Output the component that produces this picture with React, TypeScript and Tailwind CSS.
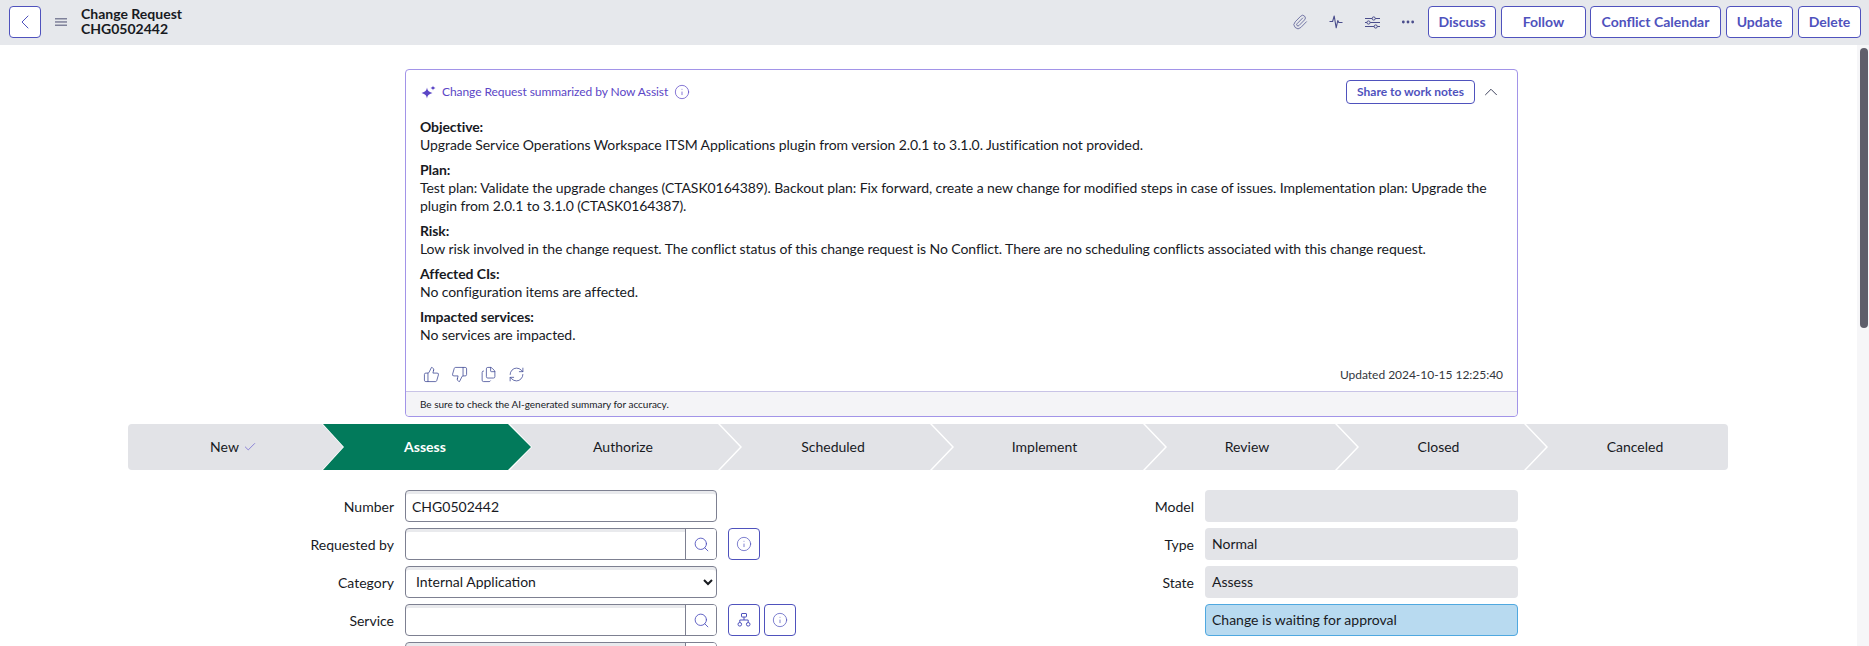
import { Paperclip, MoreHorizontal, ChevronLeft, ChevronUp, Info, ThumbsUp, ThumbsDown, Files, RefreshCw, Check, Search } from 'lucide-react';

const INK = 'text-[#181a1f]';

const summary = [
  {
    title: 'Objective:',
    lines: ['Upgrade Service Operations Workspace ITSM Applications plugin from version 2.0.1 to 3.1.0. Justification not provided.'],
  },
  {
    title: 'Plan:',
    lines: [
      'Test plan: Validate the upgrade changes (CTASK0164389). Backout plan: Fix forward, create a new change for modified steps in case of issues. Implementation plan: Upgrade the',
      'plugin from 2.0.1 to 3.1.0 (CTASK0164387).',
    ],
  },
  {
    title: 'Risk:',
    lines: ['Low risk involved in the change request. The conflict status of this change request is No Conflict. There are no scheduling conflicts associated with this change request.'],
  },
  { title: 'Affected CIs:', lines: ['No configuration items are affected.'] },
  { title: 'Impacted services:', lines: ['No services are impacted.'] },
];

function HeaderButton({ label, className }: { label: string; className: string }) {
  return (
    <button className={`h-[32px] rounded-[4px] border border-[#4f52bd] bg-white pb-[2px] text-[14px] font-bold text-[#4f52bd] ${className}`}>
      {label}
    </button>
  );
}

function IconButton({ children }: { children: React.ReactNode }) {
  return (
    <button className="flex h-[32px] w-[32px] items-center justify-center rounded-[4px] border border-[#4f52bd] bg-white text-[#4f52bd]">
      {children}
    </button>
  );
}

function HamburgerIcon() {
  return (
    <svg width="12" height="8" viewBox="0 0 12 8" fill="#7f819a">
      <rect y="0" width="12" height="1.5" />
      <rect y="3.2" width="12" height="1.5" />
      <rect y="6.5" width="12" height="1.5" />
    </svg>
  );
}

function PulseIcon() {
  return (
    <svg width="14" height="14" viewBox="0 0 14 14" fill="none" stroke="currentColor" strokeWidth="1.1" strokeLinejoin="round">
      <path d="M0.5 6.5H3.6L5.2 1L7.2 12.8L8.8 5.5L9.8 7.5H13.5" />
    </svg>
  );
}

function TuningIcon() {
  return (
    <svg width="15" height="13" viewBox="0 0 15 13" fill="none" stroke="currentColor" strokeWidth="1">
      <path d="M0 2.5H15M0 6.5H15M0 10.5H15" />
      <circle cx="8.7" cy="2.5" r="1.6" fill="#e6e8ec" />
      <circle cx="3.5" cy="6.5" r="1.6" fill="#e6e8ec" />
      <circle cx="10.7" cy="10.5" r="1.6" fill="#e6e8ec" />
    </svg>
  );
}

function SparkleIcon() {
  return (
    <svg width="15" height="14" viewBox="0 0 15 14" fill="#5b46c6">
      <path d="M6 2.5C6.5 5.6 7.6 6.9 11.5 8C7.6 9.1 6.5 10.4 6 13.5C5.5 10.4 4.4 9.1 0.5 8C4.4 6.9 5.5 5.6 6 2.5Z" />
      <path d="M12 0.5C12.2 1.9 12.8 2.4 14.5 3C12.8 3.6 12.2 4.1 12 5.5C11.8 4.1 11.2 3.6 9.5 3C11.2 2.4 11.8 1.9 12 0.5Z" />
    </svg>
  );
}

function TreeIcon() {
  return (
    <svg width="14" height="14" viewBox="0 0 14 14" fill="none" stroke="currentColor" strokeWidth="1">
      <rect x="4.5" y="0.5" width="5" height="3.5" rx="0.5" />
      <path d="M7 4V7M2.8 9.5V7H11.2V9.5" />
      <circle cx="2.8" cy="11.3" r="1.8" />
      <circle cx="11.2" cy="11.3" r="1.8" />
    </svg>
  );
}

function Header() {
  return (
    <div className="flex h-[45px] items-center bg-[#e6e8ec] pb-[1px] pl-[9px] pr-[8px]">
      <button className="flex h-[32px] w-[32px] items-center justify-center rounded-[4px] border border-[#4f52bd] bg-white text-[#4f52bd]">
        <ChevronLeft size={24} strokeWidth={1} />
      </button>
      <div className="ml-[14px] flex"><HamburgerIcon /></div>
      <div className={`-mt-[2px] ml-[14px] text-[14px] font-bold leading-[15px] ${INK}`}>
        <div>Change Request</div>
        <div>CHG0502442</div>
      </div>
      <div className="ml-auto flex items-center text-[#4a4d8c]">
        <div className="flex w-[36px] justify-center"><Paperclip size={16} strokeWidth={1.1} /></div>
        <div className="flex w-[36px] justify-center"><PulseIcon /></div>
        <div className="flex w-[36px] justify-center"><TuningIcon /></div>
        <div className="flex w-[36px] justify-center"><MoreHorizontal size={16} strokeWidth={2.2} /></div>
        <div className="ml-[2px] flex gap-[5px]">
          <HeaderButton label="Discuss" className="w-[68px]" />
          <HeaderButton label="Follow" className="w-[85px]" />
          <HeaderButton label="Conflict Calendar" className="-ml-[1px] w-[131px]" />
          <HeaderButton label="Update" className="w-[67px]" />
          <HeaderButton label="Delete" className="w-[63px]" />
        </div>
      </div>
    </div>
  );
}

function SummaryCard() {
  return (
    <div className="ml-[405px] w-[1113px] rounded-[4px] border border-[#a294e8] bg-white">
      <div className="flex h-[37px] items-center pl-[15px] pr-[15px] pt-[6px]">
        <SparkleIcon />
        <span className="ml-[6px] text-[12px] tracking-[-0.07px] text-[#5b46c6]">Change Request summarized by Now Assist</span>
        <Info size={16} strokeWidth={1.1} className="ml-[6px] text-[#5b46c6]" />
        <button className="ml-auto h-[24px] w-[129px] rounded-[4px] border border-[#4f52bd] text-[12px] font-bold text-[#4f52bd]">
          Share to work notes
        </button>
        <ChevronUp size={22} strokeWidth={1} className="ml-[5px] text-[#2f3350]" />
      </div>
      <div className={`mt-[11px] flex flex-col gap-[7px] px-[14px] text-[14px] leading-[18px] tracking-[-0.08px] ${INK}`}>
        {summary.map((s) => (
          <div key={s.title}>
            <div className="font-bold">{s.title}</div>
            {s.lines.map((l) => (
              <div key={l} className="whitespace-nowrap">{l}</div>
            ))}
          </div>
        ))}
      </div>
      <div className="mt-[14px] flex h-[33px] items-center pl-[17px] pr-[14px] text-[#3f4a96]">
        <ThumbsUp size={17} strokeWidth={1.1} />
        <ThumbsDown size={17} strokeWidth={1.1} className="ml-[11px]" />
        <Files size={17} strokeWidth={1.1} className="ml-[12px]" />
        <RefreshCw size={17} strokeWidth={1.1} className="ml-[11px]" />
        <span className="ml-auto text-[12px] tracking-[-0.03px] text-[#33363d]">Updated 2024-10-15 12:25:40</span>
      </div>
      <div className={`flex h-[25px] items-center rounded-b-[4px] border-t border-[#c8c3e6] bg-[#f4f4f7] pl-[14px] text-[10px] tracking-[-0.02px] ${INK}`}>
        Be sure to check the AI-generated summary for accuracy.
      </div>
    </div>
  );
}

function Stepper() {
  const common = 'flex h-[46px] items-center justify-center pb-[1px] text-[14px]';
  return (
    <div className={`ml-[128px] mt-[7px] flex w-[1600px] ${INK}`}>
      <div className={`${common} w-[215px] rounded-l-[4px] bg-[#e2e3e7] pr-[4px] [clip-path:polygon(0_0,194px_0,100%_50%,194px_100%,0_100%)]`}>
        New <Check size={14} strokeWidth={1.25} className="ml-[4px] text-[#6a5fd0]" />
      </div>
      <div className={`${common} -ml-[20px] w-[208px] bg-[#027a5b] pr-[4px] font-bold text-white [clip-path:polygon(0_0,185px_0,100%_50%,185px_100%,0_100%,21px_50%)]`}>
        Assess
      </div>
      <div className={`${common} -ml-[21px] w-[230px] bg-[#e2e3e7] pr-[4px] [clip-path:polygon(0_0,208px_0,100%_50%,208px_100%,0_100%,22px_50%)]`}>Authorize</div>
      <div className={`${common} -ml-[20px] w-[232px] bg-[#e2e3e7] pr-[6px] [clip-path:polygon(0_0,210px_0,100%_50%,210px_100%,0_100%,22px_50%)]`}>Scheduled</div>
      <div className={`${common} -ml-[20px] w-[233px] bg-[#e2e3e7] pr-[8px] [clip-path:polygon(0_0,211px_0,100%_50%,211px_100%,0_100%,22px_50%)]`}>Implement</div>
      <div className={`${common} -ml-[20px] w-[212px] bg-[#e2e3e7] pr-[8px] [clip-path:polygon(0_0,190px_0,100%_50%,190px_100%,0_100%,22px_50%)]`}>Review</div>
      <div className={`${common} -ml-[20px] w-[209px] bg-[#e2e3e7] pr-[6px] [clip-path:polygon(0_0,187px_0,100%_50%,187px_100%,0_100%,22px_50%)]`}>Closed</div>
      <div className={`${common} -ml-[20px] flex-1 rounded-r-[4px] bg-[#e2e3e7] pl-[16px] [clip-path:polygon(0_0,100%_0,100%_100%,0_100%,22px_50%)]`}>Canceled</div>
    </div>
  );
}

function Label({ text }: { text: string }) {
  return <div className={`w-[146px] pr-[11px] text-right text-[14px] ${INK}`}>{text}</div>;
}

const fieldBox = 'h-[32px] w-[312px] rounded-[4px] border border-[#7d8091] bg-white shadow-[inset_0_3px_0_#e9eaed]';

function LookupField() {
  return (
    <div className={`flex ${fieldBox}`}>
      <div className="flex-1" />
      <div className="flex w-[31px] items-center justify-center rounded-r-[3px] border-l border-[#7d8091] bg-white text-[#4f52bd]">
        <Search size={17} strokeWidth={1.25} />
      </div>
    </div>
  );
}

function LeftForm() {
  return (
    <div className="flex w-[800px] flex-col gap-[6px] pl-[259px]">
      <div className="flex items-center">
        <Label text="Number" />
        <div className={`flex items-center pl-[6px] text-[14px] ${INK} ${fieldBox}`}>CHG0502442</div>
      </div>
      <div className="flex items-center">
        <Label text="Requested by" />
        <LookupField />
        <div className="ml-[11px]"><IconButton><Info size={16} strokeWidth={1.1} /></IconButton></div>
      </div>
      <div className="flex items-center">
        <Label text="Category" />
        <select defaultValue="Internal Application" className={`pb-[2px] pl-[6px] text-[14px] ${INK} ${fieldBox}`}>
          <option>Internal Application</option>
        </select>
      </div>
      <div className="flex items-center">
        <Label text="Service" />
        <LookupField />
        <div className="ml-[11px] flex gap-[4px]">
          <IconButton><TreeIcon /></IconButton>
          <IconButton><Info size={16} strokeWidth={1.1} /></IconButton>
        </div>
      </div>
      <div className="flex items-center">
        <Label text="" />
        <LookupField />
      </div>
    </div>
  );
}

function RightForm() {
  const readOnly = `flex h-[32px] w-[313px] items-center rounded-[4px] bg-[#e3e4e8] pb-[2px] pl-[7px] text-[14px] ${INK}`;
  return (
    <div className="ml-[259px] flex flex-col gap-[6px]">
      <div className="flex items-center"><Label text="Model" /><div className={readOnly} /></div>
      <div className="flex items-center"><Label text="Type" /><div className={readOnly}>Normal</div></div>
      <div className="flex items-center"><Label text="State" /><div className={readOnly}>Assess</div></div>
      <div className="flex items-center">
        <Label text="" />
        <div className={`flex h-[32px] w-[313px] items-center rounded-[4px] border border-[#4fa8e0] bg-[#b8daf0] pb-[2px] pl-[6px] text-[14px] ${INK}`}>
          Change is waiting for approval
        </div>
      </div>
    </div>
  );
}

export default function App() {
  return (
    <div className="relative h-[646px] w-[1869px] overflow-hidden bg-white font-['Lato',sans-serif]">
      <Header />
      <div className="pt-[24px]">
        <SummaryCard />
        <Stepper />
        <div className="mt-[20px] flex">
          <LeftForm />
          <RightForm />
        </div>
      </div>
      <div className="absolute bottom-0 right-0 top-[45px] w-[12px] bg-[#f6f6f8]">
        <div className="ml-[3px] mt-[3px] h-[280px] w-[8px] rounded-full bg-[#5f5f6b]" />
      </div>
    </div>
  );
}
